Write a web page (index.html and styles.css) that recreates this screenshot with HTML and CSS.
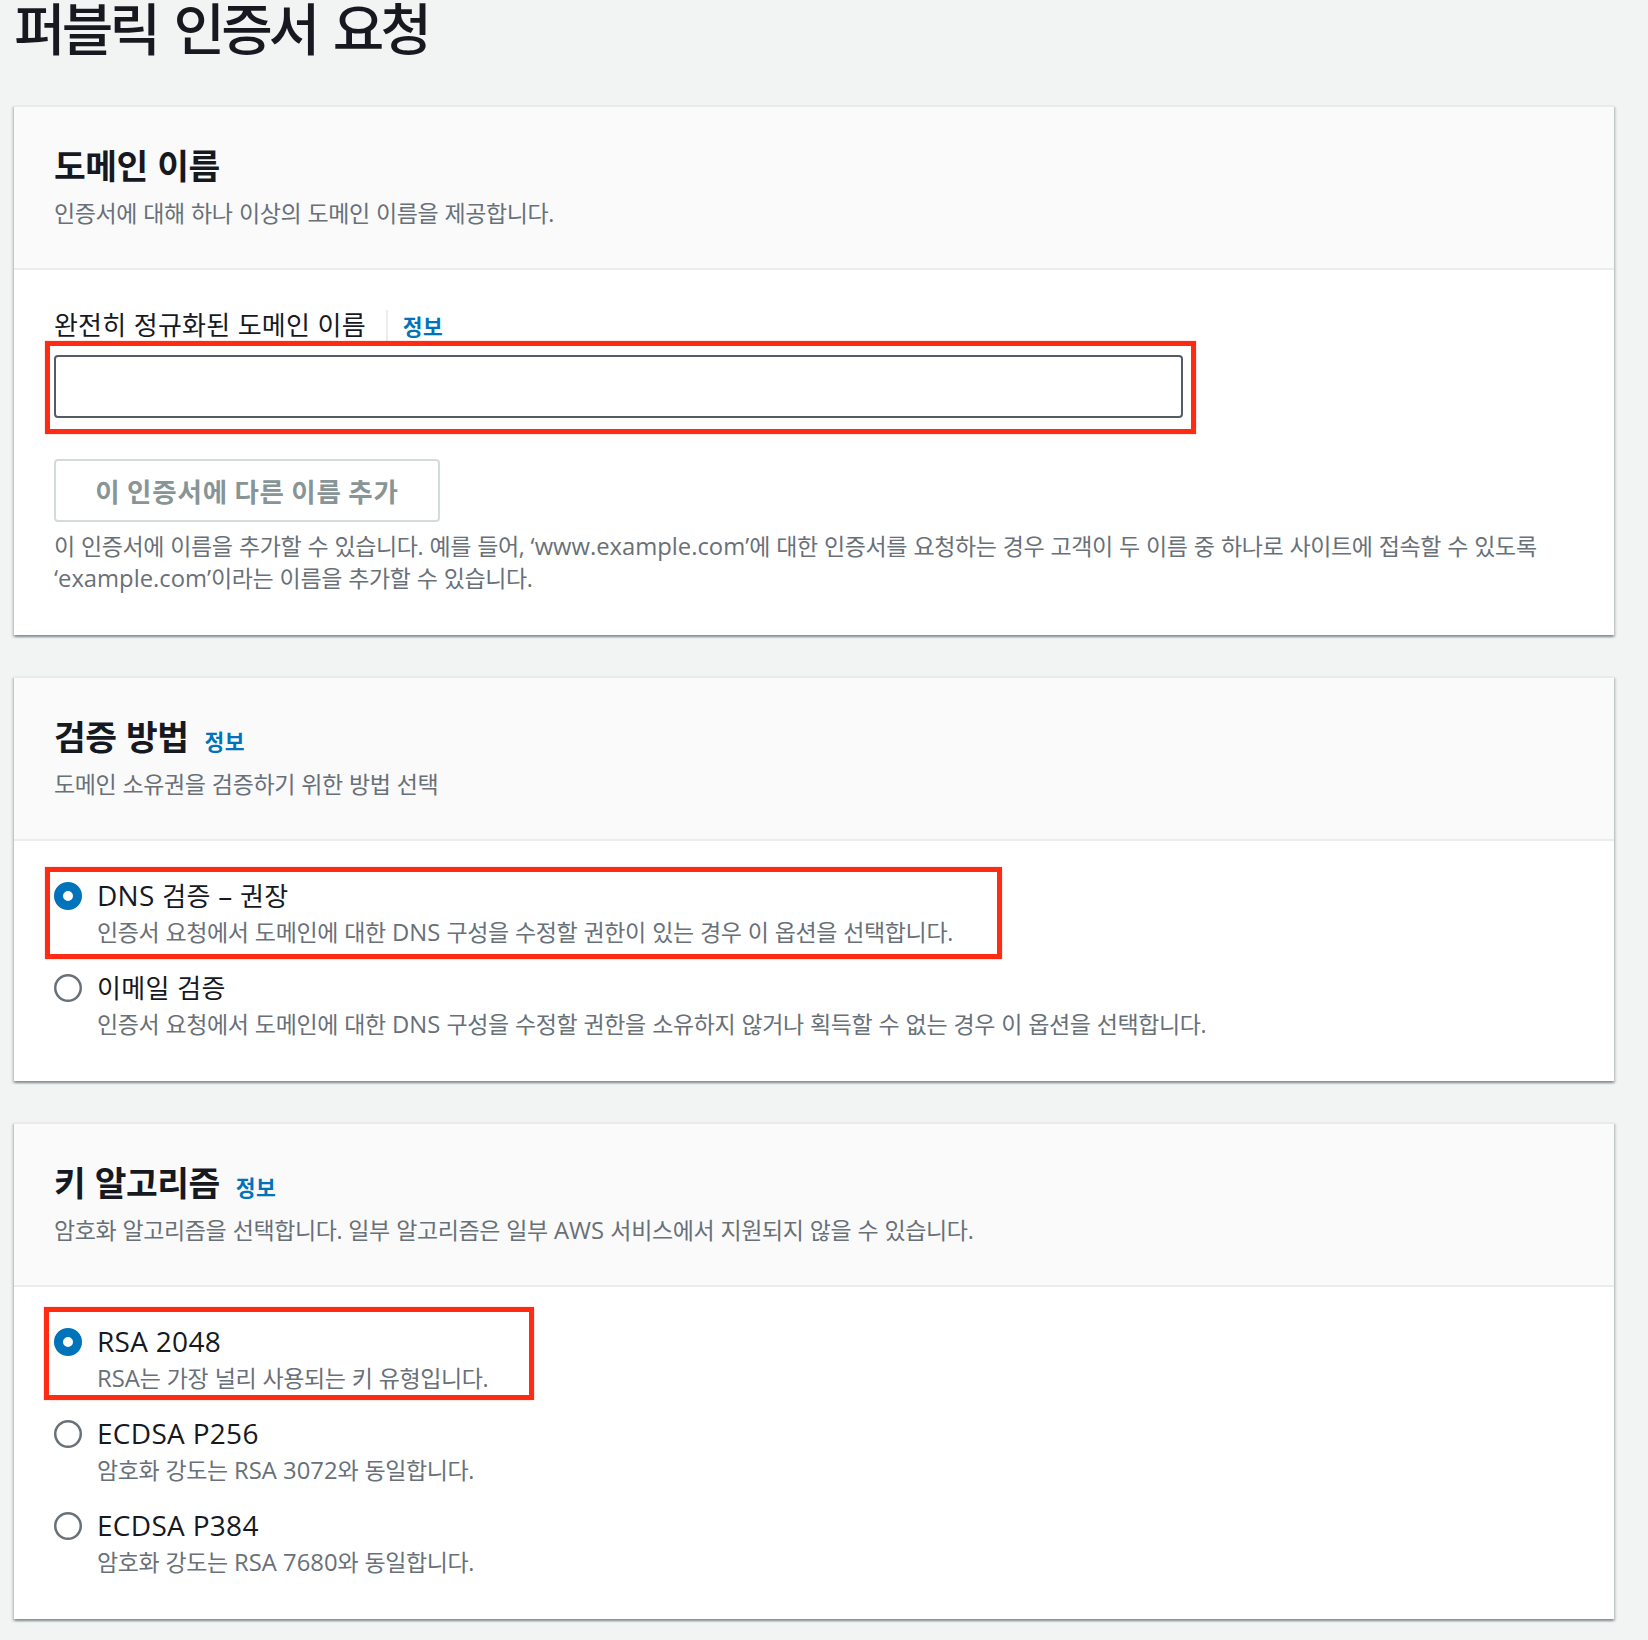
FILE: index.html
```html
<!DOCTYPE html>
<html lang="ko">
<head>
<meta charset="utf-8">
<title>퍼블릭 인증서 요청</title>
<link rel="stylesheet" href="styles.css">
</head>
<body>
<div class="page">
  <h1 class="title">퍼블릭 인증서 요청</h1>

  <section class="card">
    <header class="card-head">
      <h2 class="card-title">도메인 이름</h2>
      <p class="desc">인증서에 대해 하나 이상의 도메인 이름을 제공합니다.</p>
    </header>
    <div class="card-body">
      <div class="field-label">
        <span class="label">완전히 정규화된 도메인 이름</span>
        <span class="sep"></span>
        <a class="info" href="#">정보</a>
      </div>
      <div class="input-wrap">
        <input class="input" type="text" aria-label="완전히 정규화된 도메인 이름">
        <span class="mark mark-input"></span>
      </div>
      <button class="btn" type="button">이 인증서에 다른 이름 추가</button>
      <p class="help">이 인증서에 이름을 추가할 수 있습니다. 예를 들어, <span class="en">‘www.example.com’</span>에 대한 인증서를 요청하는 경우 고객이 두 이름 중 하나로 사이트에 접속할 수 있도록 <span class="en">‘example.com’</span>이라는 이름을 추가할 수 있습니다.</p>
    </div>
  </section>

  <section class="card">
    <header class="card-head">
      <h2 class="card-title">검증 방법<a class="info info-head" href="#">정보</a></h2>
      <p class="desc">도메인 소유권을 검증하기 위한 방법 선택</p>
    </header>
    <div class="card-body">
      <div class="radio-list">
        <div class="radio-item">
          <svg class="radio" width="28" height="28" viewBox="0 0 28 28"><circle cx="14" cy="14" r="9.5" fill="#fff" stroke="#0073bb" stroke-width="9"/></svg>
          <span class="rlabel"><span class="en">DNS</span> 검증 <span class="en">–</span> 권장</span>
          <span class="rdesc">인증서 요청에서 도메인에 대한 <span class="en">DNS</span> 구성을 수정할 권한이 있는 경우 이 옵션을 선택합니다.</span>
          <span class="mark mark-dns"></span>
        </div>
        <div class="radio-item">
          <svg class="radio" width="28" height="28" viewBox="0 0 28 28"><circle cx="14" cy="14" r="12.75" fill="#fff" stroke="#687078" stroke-width="2.5"/></svg>
          <span class="rlabel">이메일 검증</span>
          <span class="rdesc">인증서 요청에서 도메인에 대한 <span class="en">DNS</span> 구성을 수정할 권한을 소유하지 않거나 획득할 수 없는 경우 이 옵션을 선택합니다.</span>
        </div>
      </div>
    </div>
  </section>

  <section class="card">
    <header class="card-head">
      <h2 class="card-title">키 알고리즘<a class="info info-head" href="#">정보</a></h2>
      <p class="desc">암호화 알고리즘을 선택합니다. 일부 알고리즘은 일부 <span class="en">AWS</span> 서비스에서 지원되지 않을 수 있습니다.</p>
    </header>
    <div class="card-body">
      <div class="radio-list">
        <div class="radio-item">
          <svg class="radio" width="28" height="28" viewBox="0 0 28 28"><circle cx="14" cy="14" r="9.5" fill="#fff" stroke="#0073bb" stroke-width="9"/></svg>
          <span class="rlabel"><span class="en">RSA 2048</span></span>
          <span class="rdesc"><span class="en">RSA</span>는 가장 널리 사용되는 키 유형입니다.</span>
          <span class="mark mark-rsa"></span>
        </div>
        <div class="radio-item">
          <svg class="radio" width="28" height="28" viewBox="0 0 28 28"><circle cx="14" cy="14" r="12.75" fill="#fff" stroke="#687078" stroke-width="2.5"/></svg>
          <span class="rlabel"><span class="en">ECDSA P256</span></span>
          <span class="rdesc">암호화 강도는 <span class="en">RSA 3072</span>와 동일합니다.</span>
        </div>
        <div class="radio-item">
          <svg class="radio" width="28" height="28" viewBox="0 0 28 28"><circle cx="14" cy="14" r="12.75" fill="#fff" stroke="#687078" stroke-width="2.5"/></svg>
          <span class="rlabel"><span class="en">ECDSA P384</span></span>
          <span class="rdesc">암호화 강도는 <span class="en">RSA 7680</span>와 동일합니다.</span>
        </div>
      </div>
    </div>
  </section>
</div>
</body>
</html>
```

FILE: styles.css
```css
* { box-sizing: border-box; }

body {
  margin: 0;
  background: #f2f3f3;
  font-family: "Open Sans", "Noto Sans CJK KR", sans-serif;
  color: #16191f;
}

.page {
  padding: 0 34px 21px 14px;
}

.title {
  margin: 0 0 49px;
  font-size: 56px;
  line-height: 56px;
  font-weight: 500;
  letter-spacing: -3.8px;
  word-spacing: 5.5px;
  white-space: nowrap;
}

.en {
  letter-spacing: 0;
  word-spacing: 0;
  line-height: 1;
}

.card {
  background: #fff;
  border-top: 2px solid #e9ebeb;
  margin-bottom: 41px;
  box-shadow: 0 2px 2px 0 rgba(0, 28, 36, 0.3),
              2px 2px 2px 0 rgba(0, 28, 36, 0.12),
              -2px 2px 2px 0 rgba(0, 28, 36, 0.12);
}

.card:last-child { margin-bottom: 0; }

.card-head {
  background: #fafafa;
  padding: 37px 40px 39px;
  border-bottom: 2px solid #eaeded;
}

.card-title {
  margin: 0;
  font-size: 34.5px;
  line-height: 44px;
  font-weight: 700;
  letter-spacing: -0.5px;
  word-spacing: 1px;
}

.desc {
  margin: 9px 0 0;
  font-size: 23px;
  line-height: 32px;
  color: #687078;
  letter-spacing: -0.4px;
  word-spacing: 0.7px;
}

.desc .en, .help .en, .rdesc .en { font-size: 23.8px; }

.card-body {
  padding: 39px 40px 41px;
}

.field-label {
  display: flex;
  align-items: baseline;
  height: 32px;
}

.label {
  font-size: 26px;
  line-height: 32px;
  letter-spacing: 0.2px;
  word-spacing: 0.5px;
}

.sep {
  align-self: stretch;
  width: 2px;
  margin: 1px 15px 0 20px;
  background: #eaeded;
}

.info {
  color: #0073bb;
  font-weight: 700;
  font-size: 21.5px;
  letter-spacing: 0.5px;
  word-spacing: 0;
  text-decoration: none;
}

.info-head {
  margin-left: 16px;
  line-height: 1;
}

.input-wrap {
  position: relative;
  margin-top: 14px;
}

.input {
  display: block;
  width: 1129px;
  height: 63px;
  border: 2px solid #545b64;
  border-radius: 4px;
  background: #fff;
  margin: 0;
  padding: 0 16px;
  font: inherit;
}

.btn {
  display: block;
  margin-top: 41px;
  width: 386px;
  height: 63px;
  padding: 0;
  border: 2px solid #d5dbdb;
  border-radius: 4px;
  background: #fff;
  color: #879596;
  font-family: inherit;
  font-size: 26.5px;
  font-weight: 700;
  letter-spacing: 0.85px;
  word-spacing: -1.3px;
  text-align: center;
}

.help {
  margin: 8px 0 0;
  font-size: 23px;
  line-height: 32px;
  color: #687078;
  letter-spacing: -0.4px;
  word-spacing: 0.7px;
}

.radio-list {
  display: flex;
  flex-direction: column;
  gap: 24px;
}

.radio-item {
  position: relative;
  display: grid;
  grid-template-columns: 28px 1fr;
  column-gap: 15px;
}

.radio {
  display: block;
  grid-column: 1;
  grid-row: 1;
  align-self: center;
}

.rlabel {
  grid-column: 2;
  grid-row: 1;
  font-size: 26px;
  line-height: 32px;
  letter-spacing: 0.3px;
  word-spacing: 0.5px;
}

.rlabel .en {
  font-size: 28px;
  letter-spacing: 0.3px;
  word-spacing: 0;
}

.rdesc {
  grid-column: 2;
  grid-row: 2;
  margin-top: 4px;
  font-size: 23px;
  line-height: 32px;
  color: #687078;
  letter-spacing: -0.4px;
  word-spacing: 0.7px;
}

.mark {
  position: absolute;
  border: 5px solid #ff2b12;
  box-shadow: 0 0 1px rgba(255, 43, 18, 0.6);
  pointer-events: none;
}

.mark-input {
  left: -9px;
  top: -14px;
  width: 1151px;
  height: 93px;
}

.mark-dns {
  left: -9px;
  top: -13px;
  width: 957px;
  height: 92px;
}

.mark-rsa {
  left: -10px;
  top: -19px;
  width: 490px;
  height: 93px;
}
```
